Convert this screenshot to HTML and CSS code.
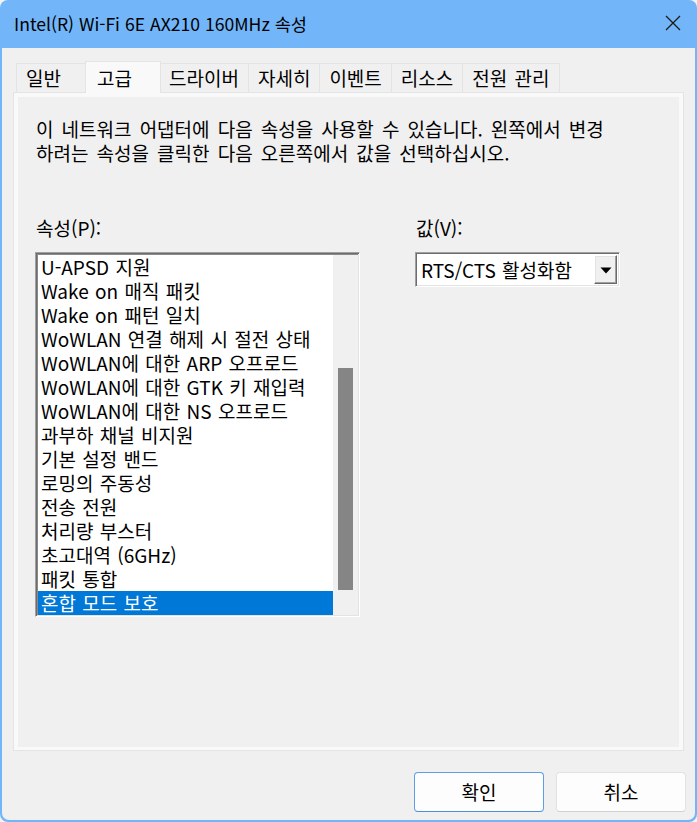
FILE: index.html
```html
<!DOCTYPE html>
<html lang="ko">
<head>
<meta charset="utf-8">
<title>Intel(R) Wi-Fi 6E AX210 160MHz 속성</title>
<link rel="stylesheet" href="styles.css">
</head>
<body>
<div class="window">
  <div class="titlebar">
    <span class="title">Intel(R) Wi-Fi 6E AX210 160MHz 속성</span>
    <span class="close">
      <svg width="16" height="16" viewBox="0 0 16 16"><path d="M1 1 L15 15 M15 1 L1 15" stroke="#1a1a1a" stroke-width="1.3" fill="none"/></svg>
    </span>
  </div>
  <div class="client">
    <div class="tabs">
      <div class="tab">일반</div>
      <div class="tab active">고급</div>
      <div class="tab">드라이버</div>
      <div class="tab">자세히</div>
      <div class="tab">이벤트</div>
      <div class="tab">리소스</div>
      <div class="tab">전원 관리</div>
    </div>
    <div class="panel">
      <div class="page">
        <p class="desc">이 네트워크 어댑터에 다음 속성을 사용할 수 있습니다. 왼쪽에서 변경<br>하려는 속성을 클릭한 다음 오른쪽에서 값을 선택하십시오.</p>
        <div class="fields">
          <div class="col-left">
            <div class="label">속성(P):</div>
            <div class="listbox">
              <ul class="items">
                <li>U-APSD 지원</li>
                <li>Wake on 매직 패킷</li>
                <li>Wake on 패턴 일치</li>
                <li>WoWLAN 연결 해제 시 절전 상태</li>
                <li>WoWLAN에 대한 ARP 오프로드</li>
                <li>WoWLAN에 대한 GTK 키 재입력</li>
                <li>WoWLAN에 대한 NS 오프로드</li>
                <li>과부하 채널 비지원</li>
                <li>기본 설정 밴드</li>
                <li>로밍의 주동성</li>
                <li>전송 전원</li>
                <li>처리량 부스터</li>
                <li>초고대역 (6GHz)</li>
                <li>패킷 통합</li>
                <li class="selected">혼합 모드 보호</li>
              </ul>
              <div class="scrollbar"><div class="thumb"></div></div>
            </div>
          </div>
          <div class="col-right">
            <div class="label">값(V):</div>
            <div class="combo">
              <span class="combo-text">RTS/CTS 활성화함</span>
              <span class="combo-btn">
                <svg width="12" height="7" viewBox="0 0 12 7"><path d="M0.5 0.5 H11.5 L6 6.5 Z" fill="#000"/></svg>
              </span>
            </div>
          </div>
        </div>
      </div>
    </div>
    <div class="buttons">
      <button class="btn default">확인</button>
      <button class="btn">취소</button>
    </div>
  </div>
</div>
</body>
</html>
```
FILE: styles.css
```css
* { box-sizing: border-box; }
html, body { margin: 0; padding: 0; }
body {
  background: #f3f3f3;
  font-family: "Noto Sans CJK KR", "Noto Sans", sans-serif;
  color: #000;
  width: 697px;
  height: 822px;
  overflow: hidden;
}
.window {
  width: 697px;
  height: 822px;
  background: #72b6f9;
  border-radius: 8px;
  display: flex;
  flex-direction: column;
  overflow: hidden;
}
.titlebar {
  height: 48px;
  flex: none;
  display: flex;
  align-items: center;
  padding: 0 16px 2px 14px;
}
.title {
  font-size: 17.6px;
  flex: 1;
  color: #000;
}
.close { display: flex; width: 16px; height: 16px; }
.client {
  flex: 1;
  margin: 0 2px 2px 2px;
  background: #f0f0f0;
  border-radius: 0 0 7px 7px;
  display: flex;
  flex-direction: column;
  padding: 13px 0 0 0;
}
.tabs {
  display: flex;
  align-items: flex-end;
  height: 31px;
  padding-left: 14px;
  position: relative;
  z-index: 1;
}
.tab {
  height: 29px;
  min-width: 72px;
  padding: 0 9px;
  font-size: 19px;
  line-height: 28px;
  border: 1px solid #e4e4e4;
  border-bottom: none;
  margin-right: -1px;
  background: #f0f0f0;
  white-space: nowrap;
  word-spacing: 2px;
}
.tab.active {
  height: 32px;
  margin: 0 -2px -1px -2px;
  padding: 0 11px;
  line-height: 31px;
  min-width: 76px;
  background: #f9f9f9;
  position: relative;
  z-index: 2;
}
.panel {
  height: 659px;
  flex: none;
  margin: 0 11px;
  border: 1px solid #e4e4e4;
  background: #f9f9f9;
  padding: 4px 4px 3px 4px;
}
.page {
  height: 100%;
  background: #f0f0f0;
  padding: 20px 0 0 17px;
}
.desc {
  margin: 0;
  font-size: 19px;
  line-height: 24px;
  padding-left: 1px;
  word-spacing: 2.8px;
}
.fields {
  display: flex;
  margin-top: 51px;
}
.col-left { width: 325px; }
.col-right { width: 205px; margin-left: 55px; }
.label {
  font-size: 19px;
  line-height: 24px;
  padding-left: 1px;
  margin-bottom: 12px;
}
.listbox {
  height: 365px;
  display: flex;
  background: #fff;
  border-top: 1px solid #a0a0a0;
  border-left: 1px solid #a0a0a0;
  border-right: 1px solid #ffffff;
  border-bottom: 1px solid #ffffff;
  box-shadow: inset 1px 1px 0 #6d6d6d, inset -1px -1px 0 #e3e3e3, inset 2px 2px 0 #8a8a8a;
  padding: 2px 1px 1px 2px;
}
.items {
  list-style: none;
  margin: 0;
  padding: 0;
  flex: 1;
}
.items li {
  height: 24px;
  line-height: 24px;
  font-size: 19px;
  padding-left: 3px;
  white-space: nowrap;
  word-spacing: 1px;
}
.items li.selected {
  background: #0078d7;
  color: #fff;
}
.scrollbar {
  width: 25px;
  background: #f0f0f0;
  padding: 113px 5px 0 5px;
}
.thumb {
  height: 222px;
  background: #858585;
}
.combo {
  height: 35px;
  display: flex;
  align-items: center;
  background: #fff;
  border-top: 1px solid #a0a0a0;
  border-left: 1px solid #a0a0a0;
  border-right: 1px solid #ffffff;
  border-bottom: 1px solid #ffffff;
  box-shadow: inset 1px 1px 0 #6d6d6d, inset -1px -1px 0 #e3e3e3;
  padding: 2px 2px 2px 5px;
}
.combo-text {
  flex: 1;
  font-size: 19px;
  line-height: 24px;
  white-space: nowrap;
  word-spacing: 1px;
}
.combo-btn {
  width: 23px;
  height: 29px;
  display: flex;
  align-items: center;
  justify-content: center;
  background: #f0f0f0;
  border-top: 1px solid #ffffff;
  border-left: 1px solid #ffffff;
  border-right: 1px solid #696969;
  border-bottom: 1px solid #696969;
  box-shadow: inset -1px -1px 0 #a0a0a0, inset 1px 1px 0 #e3e3e3;
}
.combo-btn svg { margin-top: 1px; }
.buttons {
  display: flex;
  justify-content: flex-end;
  gap: 12px;
  margin-top: 21px;
  padding-right: 9px;
}
.btn {
  width: 130px;
  height: 40px;
  font-family: "Noto Sans CJK KR", "Noto Sans", sans-serif;
  font-size: 19px;
  color: #000;
  background: #fdfdfd;
  border: 1px solid #e2e2e2;
  border-bottom-color: #d0d0d0;
  border-radius: 4px;
  padding: 0 0 2px 0;
}
.btn.default {
  border: 1px solid #5c9fe4;
  border-bottom-color: #4f8fd6;
}
```
